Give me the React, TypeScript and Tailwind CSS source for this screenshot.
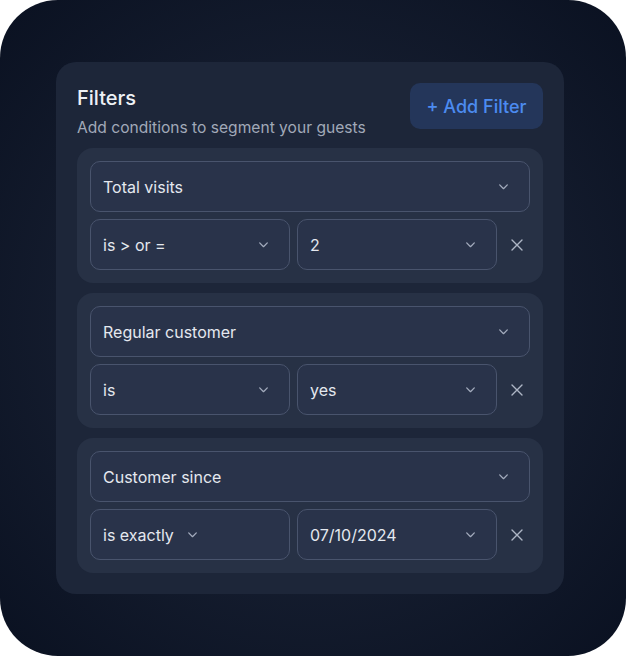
import React from 'react';

interface FilterRow {
  field: string;
  operator: string;
  value: string;
  compactOperator?: boolean;
}

const filters: FilterRow[] = [
  { field: 'Total visits', operator: 'is > or =', value: '2' },
  { field: 'Regular customer', operator: 'is', value: 'yes' },
  { field: 'Customer since', operator: 'is exactly', value: '07/10/2024', compactOperator: true },
];

const Chevron = () => (
  <svg width="13" height="13" viewBox="0 0 12 12" fill="none" className="shrink-0">
    <path d="M2.5 4.5L6 8l3.5-3.5" stroke="#a3acbd" strokeWidth="1.2" strokeLinecap="round" strokeLinejoin="round" />
  </svg>
);

const Close = () => (
  <svg width="14" height="14" viewBox="0 0 14 14" fill="none">
    <path d="M2 2l10 10M12 2L2 12" stroke="#aeb6c5" strokeWidth="1.4" strokeLinecap="round" />
  </svg>
);

function Select({ label, compact, className }: { label: string; compact?: boolean; className?: string }) {
  return (
    <div
      className={`h-[51px] flex items-center ${compact ? 'gap-[12px]' : 'justify-between'} pl-[12px] pr-[19px] rounded-[10px] border border-[#49546d] bg-[#29334a] text-[16px] text-[#e4e8ef] ${className ?? ''}`}
    >
      <span>{label}</span>
      <Chevron />
    </div>
  );
}

export default function App() {
  return (
    <div className="w-[626px] h-[656px] bg-white" style={{ fontFamily: 'Inter, "Noto Sans", sans-serif' }}>
      <div className="w-full h-full rounded-[58px] bg-[radial-gradient(ellipse_at_center,#1d2639_0%,#151d2f_50%,#0a1121_100%)] pt-[62px] pl-[56px]">
        <div className="w-[508px] rounded-[20px] bg-[#1d2639] px-[21px] pt-[21px] pb-[21px]">
          {/* Header */}
          <div className="flex justify-between items-start">
            <div>
              <h1 className="text-[20px] leading-[28px] font-medium text-[#eef1f6] mt-[1px]">Filters</h1>
              <p className="mt-[5px] text-[15.6px] leading-[22px] text-[#a1a9b8]">Add conditions to segment your guests</p>
            </div>
            <button className="h-[46px] w-[133px] rounded-[10px] bg-[#24365a] text-[18px] font-medium text-[#4c8bf0]">
              + Add Filter
            </button>
          </div>

          {/* Filter cards */}
          <div className="mt-[9px] flex flex-col gap-[10px]">
            {filters.map((f) => (
              <div key={f.field} className="rounded-[16px] bg-[#273145] p-[13px] flex flex-col gap-[7px]">
                <Select label={f.field} />
                <div className="flex items-center gap-[7px]">
                  <Select label={f.operator} compact={f.compactOperator} className="w-[200px]" />
                  <Select label={f.value} className="w-[200px]" />
                  <div className="flex-1 flex justify-center">
                    <Close />
                  </div>
                </div>
              </div>
            ))}
          </div>
        </div>
      </div>
    </div>
  );
}
